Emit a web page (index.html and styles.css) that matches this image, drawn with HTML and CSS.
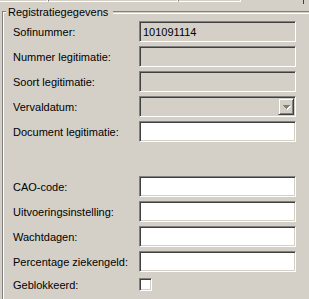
FILE: index.html
```html
<!DOCTYPE html>
<html lang="nl">
  <head>
    <meta charset="UTF-8" />
    <title>Registratiegegevens</title>
    <link rel="stylesheet" href="styles.css">
  </head>
  <body>
    <div class="top-strip">
      <span class="cell cell-a"></span>
      <span class="cell cell-b"></span>
      <span class="cell cell-c"></span>
      <span class="cell-d"></span>
    </div>

    <div class="group">
      <div class="group-title">
        <span class="title-text">Registratiegegevens</span>
        <span class="groove"></span>
      </div>

      <div class="group-body">
        <div class="row">
          <label for="sofi">Sofinummer:</label>
          <input type="text" id="sofi" class="field disabled" value="101091114" readonly />
        </div>
        <div class="row">
          <label for="nummer">Nummer legitimatie:</label>
          <input type="text" id="nummer" class="field disabled" readonly />
        </div>
        <div class="row">
          <label for="soort">Soort legitimatie:</label>
          <input type="text" id="soort" class="field disabled" readonly />
        </div>
        <div class="row">
          <label>Vervaldatum:</label>
          <div class="field disabled select">
            <span class="drop-button">
              <svg width="8" height="5" viewBox="0 0 8 5" shape-rendering="crispEdges">
                <path d="M1 1h7v1H1zM2 2h5v1H2zM3 3h3v1H3zM4 4h1v1H4z" fill="#fff" />
                <path d="M0 0h7v1H0zM1 1h5v1H1zM2 2h3v1H2zM3 3h1v1H3z" fill="#808080" />
              </svg>
            </span>
          </div>
        </div>
        <div class="row">
          <label for="document">Document legitimatie:</label>
          <input type="text" id="document" class="field" />
        </div>

        <div class="spacer"></div>

        <div class="row">
          <label for="cao">CAO-code:</label>
          <input type="text" id="cao" class="field" />
        </div>
        <div class="row">
          <label for="uitvoering">Uitvoeringsinstelling:</label>
          <input type="text" id="uitvoering" class="field" />
        </div>
        <div class="row">
          <label for="wachtdagen">Wachtdagen:</label>
          <input type="text" id="wachtdagen" class="field" />
        </div>
        <div class="row">
          <label for="percentage">Percentage ziekengeld:</label>
          <input type="text" id="percentage" class="field" />
        </div>
        <div class="row row-check">
          <label for="geblokkeerd">Geblokkeerd:</label>
          <span class="check" id="geblokkeerd"></span>
        </div>
      </div>
    </div>
  </body>
</html>
```

FILE: styles.css
```css
body {
  margin: 0;
  width: 309px;
  height: 299px;
  overflow: hidden;
  background-color: #d4d0c8;
  font-family: "Liberation Sans", Arial, sans-serif;
  font-size: 11px;
  color: #000;
}

/* bits of the row above the group */
.top-strip {
  display: flex;
  height: 4px;
}

.cell {
  box-sizing: border-box;
  height: 2px;
  border-bottom: 1px solid #fff;
  border-right: 1px solid #fff;
}

.cell-a {
  width: 48px;
}

.cell-b {
  width: 130px;
  border-left: 1px solid #808080;
}

.cell-c {
  width: 63px;
  border-left: 1px solid #808080;
}

.cell-d {
  width: 1px;
  height: 4px;
  margin-left: 62px;
  background-color: #404040;
}

/* group box */
.group {
  margin-left: 2px;
}

.group-title {
  display: flex;
  align-items: center;
  height: 16px;
}

.group-title::before {
  content: "";
  align-self: flex-end;
  box-sizing: border-box;
  width: 4px;
  height: 9px;
  margin-right: 2px;
  border-top: 1px solid #808080;
  border-left: 1px solid #808080;
  box-shadow: inset 1px 1px #fff;
}

.groove {
  flex: 1;
  height: 1px;
  margin-left: 5px;
  border-top: 1px solid #808080;
  border-bottom: 1px solid #fff;
}

.group-body {
  display: flex;
  flex-direction: column;
  gap: 4px;
  padding: 1px 0 6px 10px;
  border-left: 1px solid #808080;
  box-shadow: inset 1px 0 #fff;
}

.row {
  display: grid;
  grid-template-columns: 126px 157px;
  align-items: center;
  height: 21px;
}

.row-check {
  height: 17px;
}

.spacer {
  height: 26px;
}

/* sunken controls */
.field {
  box-sizing: border-box;
  width: 157px;
  height: 21px;
  margin: 0;
  padding: 0 0 0 3px;
  border: 1px solid;
  border-color: #808080 #fff #fff #808080;
  box-shadow: inset 1px 1px #404040, inset -1px -1px #d4d0c8;
  background-color: #fff;
  font-family: "Liberation Sans", Arial, sans-serif;
  font-size: 11px;
  color: #000;
  outline: none;
}

.disabled {
  background-color: #d4d0c8;
}

.select {
  display: flex;
  justify-content: flex-end;
  padding: 1px;
}

.drop-button {
  display: flex;
  align-items: center;
  justify-content: center;
  box-sizing: border-box;
  width: 16px;
  height: 17px;
  border: 1px solid;
  border-color: #d4d0c8 #404040 #404040 #d4d0c8;
  box-shadow: inset 1px 1px #fff, inset -1px -1px #808080;
  background-color: #d4d0c8;
}

.drop-button svg {
  display: block;
  margin: 1px 0 0 1px;
}

.check {
  box-sizing: border-box;
  width: 13px;
  height: 13px;
  border: 1px solid;
  border-color: #808080 #fff #fff #808080;
  box-shadow: inset 1px 1px #404040, inset -1px -1px #d4d0c8;
  background-color: #fff;
}
```
